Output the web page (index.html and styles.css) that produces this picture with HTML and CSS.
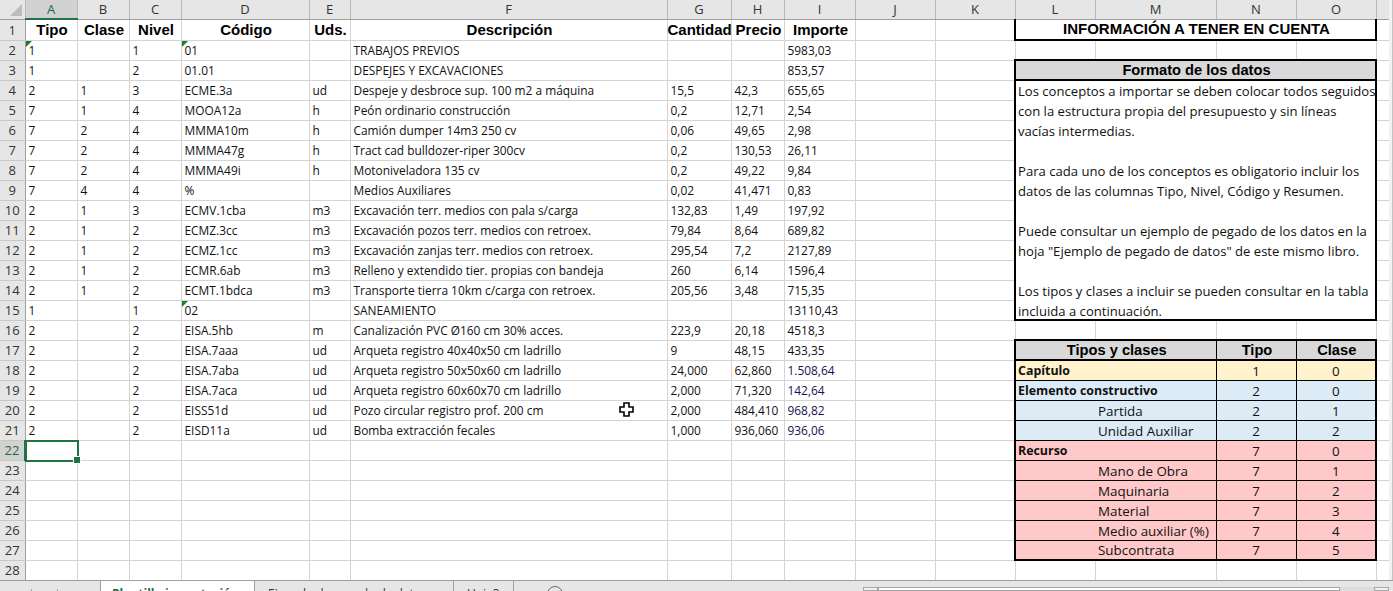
FILE: index.html
```html
<!DOCTYPE html>
<html lang="es">
<head>
<meta charset="UTF-8" />
<meta name="viewport" content="width=device-width, initial-scale=1" />
<title>Plantilla importación</title>
<link rel="stylesheet" href="styles.css">
</head>
<body>

<div class="app">
  <div class="main">
    <div class="sheet">
      <table class="grid">
        <colgroup>
          <col class="c-rh"><col class="c-52"><col class="c-52"><col class="c-52"><col class="c-d"><col class="c-e"><col class="c-f"><col class="c-g"><col class="c-h"><col class="c-i"><col class="c-80"><col class="c-80"><col class="c-80"><col class="c-m"><col class="c-80"><col class="c-80"><col class="c-p">
        </colgroup>
        <thead>
          <tr class="col-row">
            <th class="corner"><span class="corner-mark"></span></th>
            <th class="ch active">A</th><th class="ch">B</th><th class="ch">C</th><th class="ch">D</th><th class="ch">E</th><th class="ch">F</th><th class="ch">G</th><th class="ch">H</th><th class="ch">I</th><th class="ch">J</th><th class="ch">K</th><th class="ch">L</th><th class="ch">M</th><th class="ch">N</th><th class="ch">O</th><th class="ch"></th>
          </tr>
        </thead>
        <tbody>
          <!-- Fila de titulos -->
          <tr class="first-row">
            <th class="rh">1</th>
            <td class="hd">Tipo</td><td class="hd">Clase</td><td class="hd">Nivel</td><td class="hd">Código</td><td class="hd">Uds.</td><td class="hd">Descripción</td><td class="hd hd-tight">Cantidad</td><td class="hd">Precio</td><td class="hd">Importe</td><td></td><td></td>
            <td class="info-title" colspan="4">INFORMACIÓN A TENER EN CUENTA</td><td></td>
          </tr>
          <tr>
            <th class="rh">2</th>
            <td class="mark">1</td><td></td><td>1</td><td class="mark">01</td><td></td><td>TRABAJOS PREVIOS</td><td></td><td></td><td>5983,03</td><td></td><td></td>
            <td></td><td></td><td></td><td></td><td></td>
          </tr>
          <tr>
            <th class="rh">3</th>
            <td>1</td><td></td><td>2</td><td>01.01</td><td></td><td>DESPEJES Y EXCAVACIONES</td><td></td><td></td><td>853,57</td><td></td><td></td>
            <td class="info-head" colspan="4">Formato de los datos</td><td></td>
          </tr>
          <tr>
            <th class="rh">4</th>
            <td>2</td><td>1</td><td>3</td><td>ECME.3a</td><td>ud</td><td>Despeje y desbroce sup. 100 m2 a máquina</td><td>15,5</td><td>42,3</td><td>655,65</td><td></td><td></td>
            <td class="info-text" colspan="4" rowspan="12">
              <p>Los conceptos a importar se deben colocar todos seguidos<br>con la estructura propia del presupuesto y sin líneas<br>vacías intermedias.</p>
              <p>Para cada uno de los conceptos es obligatorio incluir los<br>datos de las columnas Tipo, Nivel, Código y Resumen.</p>
              <p>Puede consultar un ejemplo de pegado de los datos en la<br>hoja "Ejemplo de pegado de datos" de este mismo libro.</p>
              <p>Los tipos y clases a incluir se pueden consultar en la tabla<br>incluida a continuación.</p>
            </td>
            <td></td>
          </tr>
          <tr>
            <th class="rh">5</th>
            <td>7</td><td>1</td><td>4</td><td>MOOA12a</td><td>h</td><td>Peón ordinario construcción</td><td>0,2</td><td>12,71</td><td>2,54</td><td></td><td></td><td></td>
          </tr>
          <tr>
            <th class="rh">6</th>
            <td>7</td><td>2</td><td>4</td><td>MMMA10m</td><td>h</td><td>Camión dumper 14m3 250 cv</td><td>0,06</td><td>49,65</td><td>2,98</td><td></td><td></td><td></td>
          </tr>
          <tr>
            <th class="rh">7</th>
            <td>7</td><td>2</td><td>4</td><td>MMMA47g</td><td>h</td><td>Tract cad bulldozer-riper 300cv</td><td>0,2</td><td>130,53</td><td>26,11</td><td></td><td></td><td></td>
          </tr>
          <tr>
            <th class="rh">8</th>
            <td>7</td><td>2</td><td>4</td><td>MMMA49i</td><td>h</td><td>Motoniveladora 135 cv</td><td>0,2</td><td>49,22</td><td>9,84</td><td></td><td></td><td></td>
          </tr>
          <tr>
            <th class="rh">9</th>
            <td>7</td><td>4</td><td>4</td><td>%</td><td></td><td>Medios Auxiliares</td><td>0,02</td><td>41,471</td><td>0,83</td><td></td><td></td><td></td>
          </tr>
          <tr>
            <th class="rh">10</th>
            <td>2</td><td>1</td><td>3</td><td>ECMV.1cba</td><td>m3</td><td>Excavación terr. medios con pala s/carga</td><td>132,83</td><td>1,49</td><td>197,92</td><td></td><td></td><td></td>
          </tr>
          <tr>
            <th class="rh">11</th>
            <td>2</td><td>1</td><td>2</td><td>ECMZ.3cc</td><td>m3</td><td>Excavación pozos terr. medios con retroex.</td><td>79,84</td><td>8,64</td><td>689,82</td><td></td><td></td><td></td>
          </tr>
          <tr>
            <th class="rh">12</th>
            <td>2</td><td>1</td><td>2</td><td>ECMZ.1cc</td><td>m3</td><td>Excavación zanjas terr. medios con retroex.</td><td>295,54</td><td>7,2</td><td>2127,89</td><td></td><td></td><td></td>
          </tr>
          <tr>
            <th class="rh">13</th>
            <td>2</td><td>1</td><td>2</td><td>ECMR.6ab</td><td>m3</td><td>Relleno y extendido tier. propias con bandeja</td><td>260</td><td>6,14</td><td>1596,4</td><td></td><td></td><td></td>
          </tr>
          <tr>
            <th class="rh">14</th>
            <td>2</td><td>1</td><td>2</td><td>ECMT.1bdca</td><td>m3</td><td>Transporte tierra 10km c/carga con retroex.</td><td>205,56</td><td>3,48</td><td>715,35</td><td></td><td></td><td></td>
          </tr>
          <tr>
            <th class="rh">15</th>
            <td>1</td><td></td><td>1</td><td class="mark">02</td><td></td><td>SANEAMIENTO</td><td></td><td></td><td>13110,43</td><td></td><td></td><td></td>
          </tr>
          <tr>
            <th class="rh">16</th>
            <td>2</td><td></td><td>2</td><td>EISA.5hb</td><td>m</td><td>Canalización PVC Ø160 cm 30% acces.</td><td>223,9</td><td>20,18</td><td>4518,3</td><td></td><td></td>
            <td></td><td></td><td></td><td></td><td></td>
          </tr>
          <tr>
            <th class="rh">17</th>
            <td>2</td><td></td><td>2</td><td>EISA.7aaa</td><td>ud</td><td>Arqueta registro 40x40x50 cm ladrillo</td><td>9</td><td>48,15</td><td>433,35</td><td></td><td></td>
            <td class="key-head key-first" colspan="2">Tipos y clases</td><td class="key-head">Tipo</td><td class="key-head key-end">Clase</td><td></td>
          </tr>
          <tr>
            <th class="rh">18</th>
            <td>2</td><td></td><td>2</td><td>EISA.7aba</td><td>ud</td><td>Arqueta registro 50x50x60 cm ladrillo</td><td>24,000</td><td>62,860</td><td class="navy">1.508,64</td><td></td><td></td>
            <td class="key-name amber strong" colspan="2">Capítulo</td><td class="key-num amber">1</td><td class="key-num key-end amber">0</td><td></td>
          </tr>
          <tr>
            <th class="rh">19</th>
            <td>2</td><td></td><td>2</td><td>EISA.7aca</td><td>ud</td><td>Arqueta registro 60x60x70 cm ladrillo</td><td>2,000</td><td>71,320</td><td class="navy">142,64</td><td></td><td></td>
            <td class="key-name blue strong" colspan="2">Elemento constructivo</td><td class="key-num blue">2</td><td class="key-num key-end blue">0</td><td></td>
          </tr>
          <tr>
            <th class="rh">20</th>
            <td>2</td><td></td><td>2</td><td>EISS51d</td><td>ud</td><td>Pozo circular registro prof. 200 cm</td><td>2,000</td><td>484,410</td><td class="navy">968,82</td><td></td><td></td>
            <td class="key-name blue sub" colspan="2">Partida</td><td class="key-num blue">2</td><td class="key-num key-end blue">1</td><td></td>
          </tr>
          <tr>
            <th class="rh">21</th>
            <td>2</td><td></td><td>2</td><td>EISD11a</td><td>ud</td><td>Bomba extracción fecales</td><td>1,000</td><td>936,060</td><td class="navy">936,06</td><td></td><td></td>
            <td class="key-name blue sub" colspan="2">Unidad Auxiliar</td><td class="key-num blue">2</td><td class="key-num key-end blue">2</td><td></td>
          </tr>
          <tr>
            <th class="rh active">22</th>
            <td class="selected"><span class="sel-box"></span></td><td></td><td></td><td></td><td></td><td></td><td></td><td></td><td></td><td></td><td></td>
            <td class="key-name red strong" colspan="2">Recurso</td><td class="key-num red">7</td><td class="key-num key-end red">0</td><td></td>
          </tr>
          <tr>
            <th class="rh">23</th>
            <td></td><td></td><td></td><td></td><td></td><td></td><td></td><td></td><td></td><td></td><td></td>
            <td class="key-name red sub" colspan="2">Mano de Obra</td><td class="key-num red">7</td><td class="key-num key-end red">1</td><td></td>
          </tr>
          <tr>
            <th class="rh">24</th>
            <td></td><td></td><td></td><td></td><td></td><td></td><td></td><td></td><td></td><td></td><td></td>
            <td class="key-name red sub" colspan="2">Maquinaria</td><td class="key-num red">7</td><td class="key-num key-end red">2</td><td></td>
          </tr>
          <tr>
            <th class="rh">25</th>
            <td></td><td></td><td></td><td></td><td></td><td></td><td></td><td></td><td></td><td></td><td></td>
            <td class="key-name red sub" colspan="2">Material</td><td class="key-num red">7</td><td class="key-num key-end red">3</td><td></td>
          </tr>
          <tr>
            <th class="rh">26</th>
            <td></td><td></td><td></td><td></td><td></td><td></td><td></td><td></td><td></td><td></td><td></td>
            <td class="key-name red sub" colspan="2">Medio auxiliar (%)</td><td class="key-num red">7</td><td class="key-num key-end red">4</td><td></td>
          </tr>
          <tr>
            <th class="rh">27</th>
            <td></td><td></td><td></td><td></td><td></td><td></td><td></td><td></td><td></td><td></td><td></td>
            <td class="key-name red sub key-last" colspan="2">Subcontrata</td><td class="key-num red key-last">7</td><td class="key-num key-end red key-last">5</td><td></td>
          </tr>
          <tr>
            <th class="rh">28</th>
            <td></td><td></td><td></td><td></td><td></td><td></td><td></td><td></td><td></td><td></td><td></td><td></td><td></td><td></td><td></td><td></td>
          </tr>
        </tbody>
      </table>

      <!-- Cursor de Excel sobre la hoja -->
      <svg class="cursor" viewBox="0 0 15 15" width="15" height="15">
        <path d="M5 1h5v4h4v5h-4v4H5v-4H1V5h4z" fill="#fff" stroke="#000" stroke-width="1.6"/>
      </svg>
    </div>
    <div class="vscroll"></div>
  </div>

  <!-- Pestañas de hojas -->
  <div class="tabbar">
    <div class="tab-nav"><span class="nav-tick"></span><span class="nav-tick"></span></div>
    <div class="tab tab-active">Plantilla importación</div>
    <div class="tab tab-wide">Ejemplo de pegado de datos</div>
    <div class="tab tab-last">Hoja3</div>
    <div class="tab-add"></div>
    <div class="hscroll">
      <span class="hs-btn"></span>
      <span class="hs-thumb"></span>
      <span class="hs-track"></span>
      <span class="hs-btn"></span>
    </div>
  </div>
</div>

</body>
</html>
```

FILE: styles.css
```css
* {
  box-sizing: border-box;
}
html, body {
  margin: 0;
  height: 100%;
  overflow: hidden;
}
body {
  font-family: "Open Sans", "Noto Sans", sans-serif;
  color: #111;
  background-color: #fff;
}
.app {
  display: flex;
  flex-direction: column;
  height: 100vh;
}
.main {
  display: flex;
  flex: 1;
  min-height: 0;
}
/* Hoja */
.sheet {
  position: relative;
  width: 1389px;
  overflow: hidden;
}
.grid {
  table-layout: fixed;
  border-collapse: collapse;
  width: 1389px;
  font-size: 11.9px;
}
.c-rh { width: 25px; }
.c-52 { width: 52px; }
.c-d { width: 128px; }
.c-e { width: 41px; }
.c-f { width: 317px; }
.c-g { width: 64px; }
.c-h { width: 53px; }
.c-i { width: 71px; }
.c-80 { width: 80px; }
.c-m { width: 121px; }
.c-p { width: 13px; }
.grid tr {
  height: 20px;
}
.grid tr.col-row {
  height: 19px;
}
.grid tr.first-row {
  height: 21px;
}
.grid td {
  position: relative;
  padding: 0 0 0 3px;
  border: 1px solid #d4d4d4;
  white-space: nowrap;
  overflow: hidden;
  vertical-align: middle;
}
/* Cabeceras de filas y columnas */
.corner, .ch, .rh {
  padding: 0;
  background-color: #e6e6e6;
  font-weight: normal;
  text-align: center;
  color: #333;
  font-size: 13px;
  line-height: 16px;
}
.corner, .ch {
  border-bottom: 1px solid #9f9f9f;
  border-right: 1px solid #b8b8b8;
  position: relative;
}
.rh {
  border-right: 1px solid #9f9f9f;
  border-bottom: 1px solid #c8c8c8;
}
.ch.active {
  background-color: #d2d2d2;
  color: #1c6b3f;
  border-bottom: 2px solid #217346;
}
.rh.active {
  background-color: #d2d2d2;
  color: #1c6b3f;
  border-right: 2px solid #217346;
}
.corner-mark {
  position: absolute;
  right: 3px;
  bottom: 3px;
  border-style: solid;
  border-width: 0 0 12px 12px;
  border-color: transparent transparent #bcbcbc transparent;
}
.grid td.hd {
  padding: 0 0 0 2px;
  text-align: center;
  font-family: "Liberation Sans", Arial, sans-serif;
  font-weight: bold;
  font-size: 15px;
  line-height: 16px;
  color: #000;
}
.grid td.hd-tight {
  padding: 0;
  overflow: visible;
}
/* Marca verde de error */
.mark::before {
  content: "";
  position: absolute;
  left: 0;
  top: 0;
  border-style: solid;
  border-width: 6px 6px 0 0;
  border-color: #1e7b34 transparent transparent transparent;
}
.navy {
  color: #1a0f50;
}
/* Celda activa */
.grid td.selected {
  overflow: visible;
}
.sel-box {
  position: absolute;
  left: -1px;
  top: -1px;
  right: -2px;
  bottom: -2px;
  border: 2px solid #217346;
}
.sel-box::after {
  content: "";
  position: absolute;
  right: -4px;
  bottom: -4px;
  width: 6px;
  height: 6px;
  background-color: #217346;
  border: 1px solid #fff;
}
/* Panel de información */
.grid td.info-title {
  padding: 0 0 0 2px;
  text-align: center;
  font-family: "Liberation Sans", Arial, sans-serif;
  font-weight: bold;
  font-size: 15px;
  line-height: 16px;
  color: #000;
  border-left: 2px solid #000;
  border-right: 2px solid #000;
  border-bottom: 2px solid #000;
}
.grid td.info-head {
  padding: 0 0 0 2px;
  text-align: center;
  font-family: "Liberation Sans", Arial, sans-serif;
  font-weight: bold;
  font-size: 14.67px;
  line-height: 16px;
  color: #000;
  background-color: #d9d9d9;
  border: 2px solid #000;
}
.grid td.info-text {
  padding: 0 0 0 2px;
  vertical-align: top;
  font-size: 13.1px;
  line-height: 20px;
  border: 2px solid #000;
}
.info-text p {
  margin: 0 0 20px;
}
/* el texto no debe empujar la altura de las filas */
.info-text p:last-child {
  margin-bottom: -4px;
}
/* Tabla de tipos y clases */
.grid td.key-head {
  padding: 0 0 0 2px;
  text-align: center;
  font-family: "Liberation Sans", Arial, sans-serif;
  font-weight: bold;
  font-size: 14.67px;
  line-height: 16px;
  color: #000;
  background-color: #d9d9d9;
  border: 1px solid #000;
  border-top: 2px solid #000;
  border-bottom: 2px solid #000;
}
.grid td.key-first {
  border-left: 2px solid #000;
}
.grid td.key-name {
  padding: 1px 0 0 2px;
  font-size: 13.4px;
  line-height: 16px;
  border: 1px solid #000;
  border-left: 2px solid #000;
}
.grid td.key-num {
  padding: 1px 0 0;
  text-align: center;
  font-size: 13.4px;
  line-height: 16px;
  border: 1px solid #000;
}
.grid td.key-end {
  border-right: 2px solid #000;
}
.grid td.key-last {
  border-bottom: 2px solid #000;
}
.grid td.sub {
  padding-left: 82px;
}
.grid td.strong {
  font-weight: bold;
  font-size: 12.4px;
}
.amber { background-color: #fff2cc; }
.blue { background-color: #ddebf7; }
.red { background-color: #ffc9c9; }
/* Cursor */
.cursor {
  position: absolute;
  left: 619px;
  top: 402px;
}
/* Barra vertical */
.vscroll {
  flex: 1;
  background-color: #f1f1f1;
  border-right: 1px solid #c4c4c4;
}
/* Pestañas */
.tabbar {
  display: flex;
  flex: none;
  height: 11px;
  overflow: hidden;
  background-color: #e6e6e6;
  border-top: 1px solid #a0a0a0;
  font-size: 12px;
  line-height: 16px;
  color: #333;
}
.tab-nav {
  display: flex;
  gap: 25px;
  width: 101px;
  padding: 8px 0 0 31px;
  border-right: 1px solid #a0a0a0;
}
.nav-tick {
  width: 1px;
  height: 2px;
  background-color: #a8a8a8;
}
.tab {
  padding-top: 5px;
}
.tab-active {
  width: 154px;
  margin-top: -1px;
  padding: 6px 0 0 11px;
  background-color: #fff;
  border-right: 1px solid #a0a0a0;
  font-weight: bold;
  color: #1c6b3f;
}
.tab-wide {
  width: 199px;
  padding-left: 13px;
  border-right: 1px solid #a0a0a0;
}
.tab-last {
  width: 60px;
  padding-left: 13px;
  border-right: 1px solid #a0a0a0;
}
.tab-add {
  width: 16px;
  height: 16px;
  margin: 5px 0 0 33px;
  border: 1px solid #666;
  border-radius: 50%;
}
.hscroll {
  display: flex;
  margin: 6px 4px 0 auto;
  width: 526px;
}
.hs-btn {
  width: 15px;
  border: 1px solid #a6a6a6;
  background-color: #f1f1f1;
}
.hs-thumb {
  width: 462px;
  border: 1px solid #a6a6a6;
  background-color: #fff;
}
.hs-track {
  flex: 1;
  background-color: #dcdcdc;
}
```
